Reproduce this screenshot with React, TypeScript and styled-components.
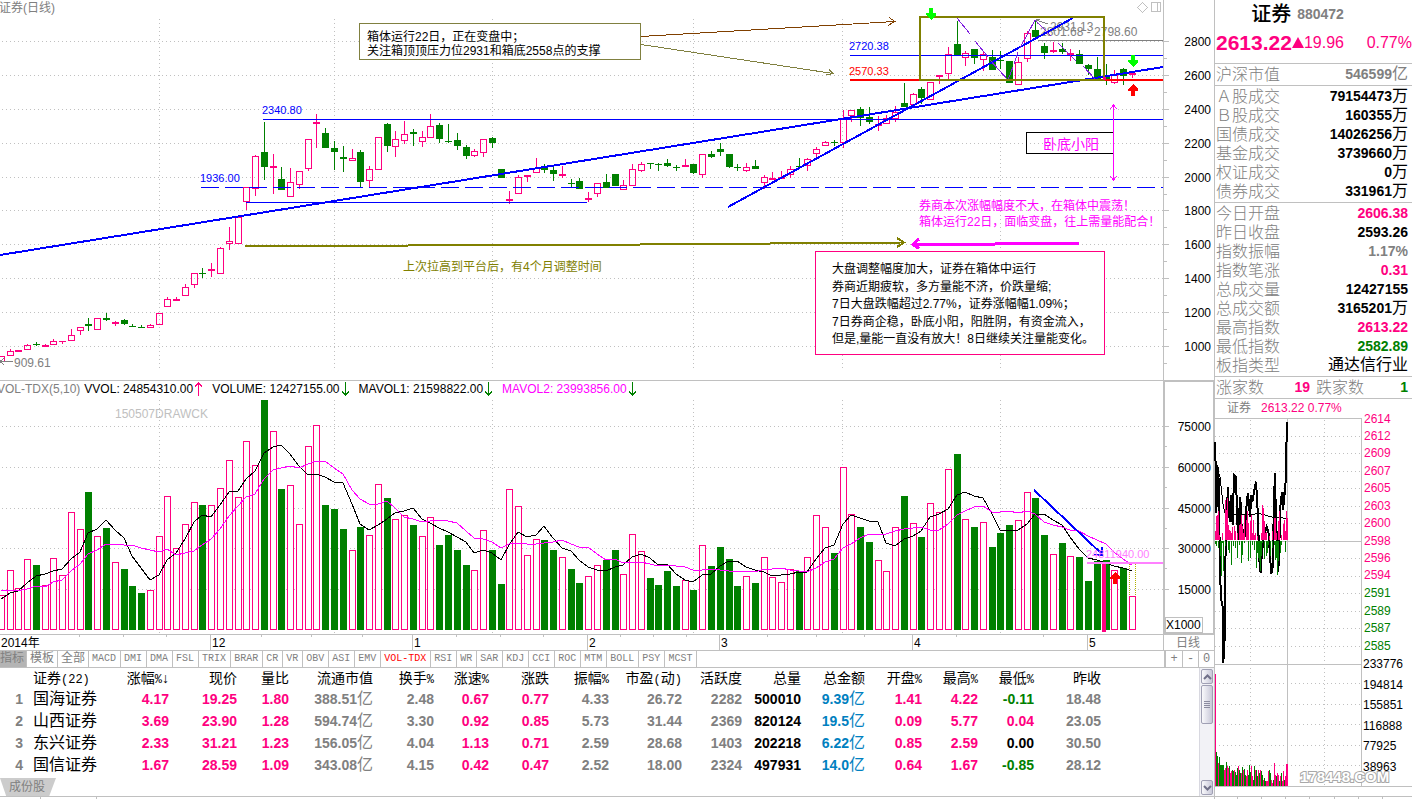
import React from "react";
import styled, { createGlobalStyle } from "styled-components";

const PINK = "#ff0080";
const GREEN = "#008000";
const GRAY = "#808080";
const LINE = "#c0c0c0";
const BLUE = "#0000ff";
const OLIVE = "#808000";
const MAGENTA = "#ff00ff";
const SANS = '"Liberation Sans", "Noto Sans CJK SC", sans-serif';
const MONO = '"Liberation Mono", "Noto Sans CJK SC", monospace';

const GlobalStyle = createGlobalStyle`
  * { box-sizing: border-box; }
  body { margin: 0; background: #fff; color: #000; font: 12px/16px ${SANS}; }
  button { font: inherit; color: inherit; margin: 0; border: 0; background: none; padding: 0; }
`;

/* ---------- data ---------- */

type Kind = "r" | "g";
// kind, body top, body bottom, high, low
type Candle = [Kind, number, number, number, number];

const candles: Candle[] = [
  ["r", 356, 361, 356, 361], ["r", 351, 355, 349, 355], ["r", 350, 351, 350, 351], ["r", 345, 349, 344, 349],
  ["g", 344, 344, 342, 345], ["r", 345, 346, 344, 346], ["r", 341, 344, 339, 344], ["r", 341, 341, 341, 343],
  ["r", 335, 340, 329, 340], ["r", 327, 330, 327, 334], ["g", 324, 325, 318, 330], ["r", 318, 329, 318, 329],
  ["g", 318, 319, 313, 320], ["r", 322, 323, 321, 325], ["g", 320, 323, 319, 324], ["g", 326, 326, 324, 326],
  ["g", 327, 327, 325, 327], ["r", 325, 327, 324, 327], ["r", 313, 324, 313, 324], ["r", 299, 306, 297, 306],
  ["r", 299, 300, 297, 300], ["r", 287, 295, 284, 295], ["r", 273, 284, 273, 287], ["g", 273, 273, 268, 277],
  ["r", 269, 270, 263, 276], ["r", 248, 273, 247, 273], ["r", 241, 243, 227, 249], ["r", 217, 243, 217, 243],
  ["r", 187, 201, 187, 209], ["r", 156, 188, 155, 195], ["g", 152, 166, 122, 179], ["r", 166, 167, 154, 193],
  ["g", 179, 189, 167, 189], ["r", 182, 196, 168, 196], ["r", 171, 184, 171, 188], ["r", 139, 168, 139, 170],
  ["r", 122, 123, 114, 147], ["g", 133, 147, 128, 147], ["g", 148, 151, 141, 169], ["g", 157, 158, 146, 171],
  ["r", 158, 160, 149, 160], ["g", 152, 181, 150, 187], ["r", 169, 180, 166, 187], ["r", 137, 169, 137, 169],
  ["g", 124, 145, 123, 151], ["r", 139, 146, 131, 156], ["r", 134, 140, 121, 143], ["g", 132, 133, 129, 145],
  ["r", 137, 141, 131, 146], ["r", 126, 137, 114, 137], ["g", 125, 138, 123, 142], ["g", 141, 141, 124, 142],
  ["g", 140, 145, 133, 149], ["g", 147, 155, 145, 158], ["r", 151, 155, 149, 156], ["r", 139, 152, 139, 156],
  ["g", 138, 142, 137, 147], ["g", 169, 177, 169, 177], ["r", 199, 200, 191, 203], ["r", 177, 193, 175, 193],
  ["r", 175, 176, 175, 181], ["r", 168, 172, 158, 172], ["g", 167, 169, 164, 172], ["g", 170, 173, 167, 180],
  ["r", 174, 175, 166, 177], ["g", 183, 183, 179, 186], ["g", 181, 188, 178, 188], ["r", 198, 199, 192, 201],
  ["r", 183, 193, 183, 196], ["g", 182, 187, 174, 187], ["g", 174, 185, 174, 185], ["r", 185, 189, 180, 189],
  ["r", 169, 185, 164, 185], ["r", 164, 170, 162, 171], ["g", 163, 163, 163, 168], ["g", 164, 164, 163, 170],
  ["g", 163, 165, 159, 166], ["g", 167, 167, 165, 170], ["r", 165, 166, 159, 166], ["g", 164, 172, 164, 173],
  ["r", 154, 174, 154, 177], ["g", 154, 156, 151, 157], ["g", 149, 151, 143, 155], ["g", 154, 166, 154, 167],
  ["g", 167, 167, 164, 170], ["r", 167, 170, 163, 171], ["g", 166, 168, 160, 168], ["r", 177, 182, 175, 188],
  ["r", 178, 179, 172, 179], ["r", 177, 178, 171, 178], ["r", 169, 174, 166, 177], ["g", 166, 166, 158, 168],
  ["r", 159, 165, 158, 170], ["r", 149, 153, 147, 157], ["r", 142, 145, 141, 145], ["g", 142, 142, 140, 145],
  ["r", 118, 142, 110, 147], ["r", 110, 115, 110, 121], ["g", 109, 117, 107, 125], ["g", 117, 121, 107, 123],
  ["r", 124, 125, 116, 130], ["r", 118, 123, 115, 123], ["r", 112, 118, 106, 121], ["g", 103, 106, 83, 106],
  ["r", 94, 104, 93, 104], ["g", 89, 97, 87, 103], ["r", 82, 99, 82, 99], ["r", 75, 76, 75, 83],
  ["r", 54, 73, 47, 79], ["g", 44, 55, 21, 55], ["r", 53, 57, 51, 65], ["g", 49, 57, 49, 63],
  ["r", 54, 59, 51, 70], ["g", 57, 69, 50, 69], ["g", 60, 60, 51, 68], ["g", 61, 82, 61, 82],
  ["r", 62, 84, 57, 84], ["r", 33, 58, 31, 61], ["g", 30, 36, 21, 36], ["g", 46, 52, 43, 58],
  ["r", 50, 51, 42, 52], ["g", 49, 51, 43, 53], ["r", 53, 54, 49, 60], ["g", 54, 63, 50, 63],
  ["g", 65, 68, 64, 74], ["g", 69, 79, 57, 80], ["g", 77, 79, 64, 84], ["r", 75, 82, 70, 83],
  ["g", 69, 75, 68, 84], ["r", 73, 74, 73, 77],
];

// Bar tops, in thirds of a pixel below the top of the volume scale.
const warmUp = [590, 605, 623, 650, 627, 676, 676, 676, 676];
const volumes = [
  661, 586, 640, 553, 570, 631, 550, 601, 412, 463, 351, 484, 459, 562, 582, 633, 654, 646, 484, 364,
  520, 448, 382, 390, 391, 340, 256, 367, 199, 271, 75, 169, 342, 331, 448, 214, 151, 390, 402, 462,
  526, 456, 481, 328, 369, 433, 422, 450, 484, 427, 510, 480, 525, 570, 586, 466, 525, 627, 343, 394,
  541, 493, 495, 525, 547, 582, 624, 604, 571, 555, 525, 598, 478, 529, 609, 630, 588, 633, 616, 645,
  511, 573, 516, 552, 633, 604, 624, 547, 607, 622, 583, 589, 547, 421, 457, 534, 277, 418, 456, 501,
  556, 589, 457, 363, 445, 486, 385, 412, 283, 237, 433, 456, 442, 516, 474, 450, 436, 352, 369, 480,
  538, 504, 544, 546, 618, 558, 555, 586, 579, 664,
];

const column = (i: number) => Math.floor(1.3 + 8.768 * i);
const volumeY = (v: number) => 375 + Math.floor(v / 3);

const movingAverage = (span: number) => {
  const all = [...warmUp, ...volumes];
  return volumes
    .map((_, i) => {
      const end = i + warmUp.length + 1;
      const mean = all.slice(end - span, end).reduce((a, b) => a + b, 0) / span;
      return `${column(i)},${375 + Math.round(mean / 3)}`;
    })
    .join(" ");
};

const verticals = [159, 334, 492, 693, 842, 1000];
const priceScale: [number, number][] = [
  [2800, 41], [2600, 75], [2400, 109], [2200, 143], [2000, 177],
  [1800, 210], [1600, 244], [1400, 278], [1200, 312], [1000, 346],
];
const volumeScale: [number, number][] = [[75000, 426], [60000, 467], [45000, 508], [30000, 548], [15000, 589]];
const months: [string, number][] = [["12", 210], ["1", 412], ["2", 587], ["3", 719], ["4", 912], ["5", 1087]];
const weekTicks = [79, 123, 166, 261, 311, 362, 456, 500, 543, 620, 653, 686, 767, 816, 864, 956, 1043];

/* ---------- layout ---------- */

const Page = styled.div`
  display: grid;
  grid-template-columns: minmax(0, 1fr) 198px;
  min-height: 100vh;
  overflow: hidden;
`;

const Main = styled.main`
  display: flex;
  flex-direction: column;
  min-width: 0;
`;

const Chart = styled.svg`
  display: block;
  width: 100%;
  height: auto;
  overflow: visible;
  shape-rendering: crispEdges;
  font-family: ${SANS};
  font-size: 12px;
`;

const VolumePanel = styled.section`
  position: relative;
`;

const Legend = styled.div`
  position: absolute;
  top: 0;
  left: 0;
  display: flex;
  gap: 9px;
  margin-left: -3px;
`;

const LegendItem = styled.span<{ $color?: string }>`
  display: flex;
  align-items: center;
  gap: 1px;
  color: ${(p) => p.$color ?? "#000"};
  white-space: nowrap;
  &:first-child { margin-right: -5px; }
`;

const IndicatorBar = styled.nav`
  display: flex;
  height: 17px;
  border-bottom: 1px solid ${LINE};
  font: 10px/16px ${MONO};
`;

const IndicatorTab = styled.button<{ $tone?: "active" | "red"; $cjk?: boolean }>`
  padding: ${(p) => (p.$tone === "active" ? "0 2px 0 0" : p.$cjk ? "0 3px" : "0 4px 0 3px")};
  border-right: 1px solid ${LINE};
  white-space: nowrap;
  font-size: ${(p) => (p.$cjk ? "12px" : "10px")};
  color: ${(p) => (p.$tone === "red" ? "#ff0000" : GRAY)};
  background: ${(p) => (p.$tone === "active" ? "#b4b4b4" : "transparent")};
`;

const ZoomGroup = styled.div`
  display: flex;
  margin-left: auto;
  border-left: 2px solid ${LINE};
`;

const ZoomButton = styled.button`
  width: 16px;
  color: ${GRAY};
  font-size: 12px;
  & + & { border-left: 1px solid ${LINE}; }
`;

const TableArea = styled.section`
  display: flex;
  justify-content: space-between;
  border-bottom: 1px solid ${LINE};
`;

const TableColumn = styled.div`
  flex: 1;
  min-width: 0;
`;

const Quotes = styled.table`
  table-layout: fixed;
  width: 1101px;
  border-collapse: collapse;
`;

const HeadCell = styled.th<{ $left?: boolean }>`
  height: 20px;
  padding: 0;
  font-size: 14px;
  line-height: 20px;
  font-weight: 400;
  white-space: nowrap;
  text-align: ${(p) => (p.$left ? "left" : "right")};
  padding-left: ${(p) => (p.$left ? "10px" : "0")};
`;

const Latin = styled.span`
  font-family: ${MONO};
  font-size: 12px;
  line-height: 12px;
`;

const NameCell = styled.th`
  padding: 0 0 0 10px;
  font-size: 16px;
  line-height: 22px;
  font-weight: 400;
  text-align: left;
  white-space: nowrap;
`;

const Cell = styled.td<{ $color: string }>`
  height: 22px;
  padding: 0;
  font-size: 14px;
  line-height: 22px;
  font-weight: 700;
  text-align: right;
  white-space: nowrap;
  color: ${(p) => p.$color};
`;

const Unit = styled.span`
  font-size: 16px;
  line-height: 16px;
  font-weight: 400;
`;

const SheetTab = styled.button`
  display: block;
  width: 56px;
  height: 18px;
  margin-top: 2px;
  padding-right: 2px;
  line-height: 17px;
  color: ${GRAY};
  background: #cccccc;
  clip-path: polygon(0 0, 100% 0, 88% 100%, 11% 100%);
`;

const ScrollTrack = styled.div`
  display: flex;
  flex-direction: column;
  gap: 1px;
  width: 15px;
  padding: 1px;
  border-left: 1px solid #d8d8e0;
  background: #f2f2f6;
`;

const ScrollPart = styled.button<{ $height: number; $last?: boolean }>`
  display: grid;
  place-items: center;
  height: ${(p) => p.$height}px;
  margin-top: ${(p) => (p.$last ? "auto" : "0")};
  border: 1px solid #a0a0b4;
  border-radius: 2px;
  background: linear-gradient(90deg, #fafafc, #c8c8d8);
`;

const StatusTicks = styled.div`
  display: flex;
  height: 2px;
`;

const StatusCell = styled.span<{ $width: number }>`
  width: ${(p) => p.$width}px;
  border-right: 1px solid ${LINE};
`;

const Side = styled.aside`
  border-left: 1px solid ${LINE};
  min-width: 0;
`;

const Title = styled.h1`
  display: flex;
  justify-content: center;
  align-items: center;
  gap: 6px;
  height: 28px;
  margin: 0;
  padding-right: 32px;
  font-size: 20px;
  line-height: 28px;
  font-weight: 500;
`;

const Code = styled.span`
  color: ${GRAY};
  font-size: 14px;
  font-weight: 700;
`;

const PriceRow = styled.div`
  display: flex;
  align-items: center;
  height: 35px;
  padding: 0 0 6px 1px;
  font-size: 16px;
  color: ${PINK};
  white-space: nowrap;
`;

const LastPrice = styled.strong`
  font-size: 21px;
`;

const Percent = styled.span`
  margin-left: auto;
`;

const Group = styled.dl`
  margin: 0;
  padding: 1px 4px 1px 1px;
  border-top: 1px solid ${LINE};
`;

const Stat = styled.div`
  display: flex;
  justify-content: space-between;
  height: 19px;
  line-height: 19px;
`;

const Counts = styled(Stat)`
  display: grid;
  grid-template-columns: 48px 46px 48px 1fr;
  & > dd { text-align: right; }
  & > dt + dd + dt { padding-left: 6px; white-space: nowrap; }
`;

const Label = styled.dt`
  color: ${GRAY};
  font-size: 16px;
  font-weight: 300;
`;

const Value = styled.dd<{ $color?: string }>`
  margin: 0;
  font-size: 14px;
  font-weight: 700;
  color: ${(p) => p.$color ?? "#000"};
`;

const MiniHeader = styled.div`
  display: flex;
  gap: 10px;
  height: 20px;
  padding: 1px 0 0 12px;
  border-top: 1px solid ${LINE};
  color: ${PINK};
`;

const MiniName = styled.span`
  color: ${GRAY};
`;

/* ---------- charts ---------- */

const Shaft: React.FC<{ x: number; y: number; color: string; up?: boolean }> = ({ x, y, color, up }) => (
  <path
    fill={color}
    d={
      up
        ? `M${x} ${y}l5 5v2h-3v5h-4v-5h-3v-2z`
        : `M${x} ${y + 12}l5 -5v-2h-3v-5h-4v5h-3v2z`
    }
  />
);

const CandleMark: React.FC<{ x: number; data: Candle }> = ({ x, data: [kind, top, bottom, high, low] }) => {
  const color = kind === "r" ? PINK : GREEN;
  const solid = kind === "g" || bottom - top < 2;
  return (
    <g>
      {high < top && <rect x={x} y={high} width={1} height={top - high} fill={color} />}
      {low > bottom && <rect x={x} y={bottom + 1} width={1} height={low - bottom} fill={color} />}
      {solid ? (
        <rect x={x - 3} y={top} width={7} height={bottom - top + 1} fill={color} />
      ) : (
        <rect x={x - 2.5} y={top + 0.5} width={6} height={bottom - top} fill="none" stroke={color} />
      )}
    </g>
  );
};

const PriceChart = () => (
  <Chart viewBox="0 0 1214 381" role="img" aria-label="证券日线">
    <g stroke={LINE} strokeDasharray="1 3">
      {priceScale.map(([v, y]) => <line key={v} x1={2} x2={1163} y1={y + 0.5} y2={y + 0.5} />)}
      {verticals.map((x) => <line key={x} x1={x + 0.5} x2={x + 0.5} y1={19} y2={368} />)}
    </g>
    <g fill={LINE}>
      <rect x={1163} y={0} width={1} height={381} />
      <rect x={0} y={380} width={1214} height={1} />
      {priceScale.map(([v, y]) => (
        <g key={v}>
          <rect x={1164} y={y} width={5} height={1} />
          <rect x={1164} y={y + 17} width={3} height={1} />
        </g>
      ))}
    </g>
    <g textAnchor="end">
      {priceScale.map(([v, y]) => <text key={v} x={1211} y={y + 5}>{v}</text>)}
    </g>
    <text x={-1} y={12} fill={GRAY}>证券(日线)</text>
    <path d="M1142.5 2.5l5 5l-5 5l-5 -5zM1151.5 2.5h9v9h-9zM1157.5 2.5v9" fill="none" stroke={LINE} />

    {candles.map((c, i) => <CandleMark key={i} x={column(i)} data={c} />)}

    <path d="M0 361.5h13M4 358l-4 3.5l4 3.5" fill="none" stroke={GRAY} />
    <text x={14} y={367} fill={GRAY}>909.61</text>

    <g fill={GRAY}>
      <text x={1050} y={31}>2931.13</text>
      <text x={1040} y={36}>2801.68 - 2798.60</text>
      <rect x={1038} y={40} width={125} height={1} />
    </g>
    <path d="M1036 20l12 4M1040 19l-4 1l2 4" fill="none" stroke={GRAY} />

    <g stroke={BLUE} fill="none">
      <path d="M850 55.5H1163M263 119.5H1163M246 202.5H587" />
      <path d="M201 187.5H1163" strokeDasharray="18 6" />
    </g>
    <rect x={850} y={79} width={313} height={2} fill="#ff0000" />
    <g stroke={BLUE} strokeWidth={2}>
      <line x1={0} y1={255} x2={1163} y2={67} />
      <line x1={728} y1={207} x2={1073} y2={18} />
    </g>
    <g fontSize={11} fill={BLUE}>
      <text x={849} y={50}>2720.38</text>
      <text x={849} y={75} fill="#ff0000">2570.33</text>
      <text x={262} y={114}>2340.80</text>
      <text x={200} y={182}>1936.00</text>
    </g>

    <g fill="none" stroke="#8020e0">
      <path d="M957 18l13 16M975 41l13 16M990 60l18 20l5 -13M1014 64l4 -12M1020 48l15 -28l16 16M1058 43l18 18M1083 66l12 13" />
    </g>
    <rect x={920} y={17} width={184} height={63} fill="none" stroke={OLIVE} strokeWidth={2} />
    <rect x={1103} y={77} width={3} height={3} fill={PINK} />
    <Shaft x={931} y={8} color="#00ff00" />
    <Shaft x={1133} y={55} color="#00ff00" />
    <Shaft x={1133} y={84} color="#ff0000" up />

    <rect x={359.5} y={23.5} width={281} height={36} fill="#fff" stroke="#808040" />
    <text x={367} y={41}>箱体运行22日，正在变盘中；</text>
    <text x={367} y={55}>关注箱顶顶压力位2931和箱底2558点的支撑</text>
    <path d="M641 36.5L895 21.5M889 17.5l6 4l-7 4" fill="none" stroke="#804000" />
    <path d="M641 44.5L833 73.5M829 69.5l4 4l-7 1.5" fill="none" stroke="#808040" />

    <rect x={1026.5} y={132.5} width={87} height={21} fill="none" stroke="#000" />
    <text x={1043} y={149} fontSize={14} fill={MAGENTA}>卧底小阳</text>
    <path d="M1113.5 105v75M1110 109l3.500 -4l3.500 4M1110 176l3.500 4l3.500 -4" fill="none" stroke={MAGENTA} />

    <g fill={MAGENTA}>
      <text x={919} y={210}>券商本次涨幅幅度不大，在箱体中震荡！</text>
      <text x={919} y={226}>箱体运行22日，面临变盘，往上需量能配合！</text>
    </g>
    <path d="M245 246L575 245L902 242.500M897 238l7 4.500l-7 4.500" fill="none" stroke={OLIVE} strokeWidth={2} />
    <path d="M1079 243.500L914 244.500M919 239l-6 5.500l6 4" fill="none" stroke={MAGENTA} strokeWidth={3} />
    <text x={403} y={271} fill={OLIVE}>上次拉高到平台后，有4个月调整时间</text>

    <rect x={815.5} y={251.5} width={289} height={103} fill="#fff" stroke={PINK} />
    <text x={832} y={273}>大盘调整幅度加大，证券在箱体中运行</text>
    <text x={832} y={291}>券商近期疲软，多方量能不济，价跌量缩;</text>
    <text x={832} y={308}>7日大盘跌幅超过2.77%，证券涨幅幅1.09%；</text>
    <text x={832} y={326}>7日券商企稳，卧底小阳，阳胜阴，有资金流入，</text>
    <text x={832} y={343}>但是,量能一直没有放大！8日继续关注量能变化。</text>
  </Chart>
);

const VolumeChart = () => (
  <Chart viewBox="0 381 1214 270" role="img" aria-label="成交量">
    <g stroke={LINE} strokeDasharray="1 3">
      {volumeScale.map(([v, y]) => <line key={v} x1={2} x2={1163} y1={y + 0.5} y2={y + 0.5} />)}
      {verticals.map((x) => <line key={x} x1={x + 0.5} x2={x + 0.5} y1={400} y2={633} />)}
    </g>
    <text x={115} y={418} fill={LINE}>150507DRAWCK</text>

    {volumes.map((v, i) => {
      const x = column(i);
      const y = volumeY(v);
      return candles[i][0] === "g" ? (
        <rect key={i} x={x - 3} y={y} width={7} height={630 - y} fill={GREEN} />
      ) : (
        <rect key={i} x={x - 2.5} y={y + 0.5} width={6} height={629 - y} fill="#fff" stroke={PINK} />
      );
    })}
    <path d="M1129.5 562V596M1135.500 562V596" fill="none" stroke="#b0b000" strokeDasharray="1 1" />
    <polyline points={movingAverage(5)} fill="none" stroke="#000" />
    <polyline points={movingAverage(10)} fill="none" stroke={MAGENTA} />

    <rect x={1102} y={562} width={4} height={70} fill={PINK} />
    <Shaft x={1115} y={572} color="#ff0000" up />
    <path d="M1034 490L1103 555M1102 547v8h-8" fill="none" stroke={BLUE} strokeWidth={2} />
    <text x={1086} y={558} fontSize={11} fill="#ff80ff">24811940.00</text>
    <rect x={1087} y={562} width={76} height={2} fill="#ff80ff" />

    <g fill={LINE}>
      <rect x={1163} y={381} width={2} height={253} />
      <rect x={1165} y={381} width={49} height={1} />
      <rect x={1213} y={381} width={1} height={253} />
      <rect x={0} y={634} width={1214} height={1} />
      <rect x={1163} y={633} width={51} height={2} />
      <rect x={0} y={650} width={1214} height={1} />
      <rect x={1163} y={635} width={1} height={15} />
      {volumeScale.map(([v, y]) => (
        <g key={v}>
          <rect x={1165} y={y} width={4} height={1} />
          {v > 15000 && <rect x={1165} y={y + 20} width={2} height={1} />}
        </g>
      ))}
      {months.map(([m, x]) => <rect key={m} x={x} y={635} width={1} height={15} />)}
      {weekTicks.map((x) => <rect key={x} x={x} y={635} width={1} height={2} />)}
    </g>
    <g textAnchor="end">
      {volumeScale.map(([v, y]) => <text key={v} x={1211} y={y + 5}>{v}</text>)}
    </g>
    <rect x={1165.5} y={617.5} width={37} height={15} fill="#fff" stroke={LINE} />
    <text x={1166} y={629}>X1000</text>
    <text x={1} y={647}>2014年</text>
    {months.map(([m, x]) => <text key={m} x={x + 2} y={647}>{m}</text>)}
    <text x={1176} y={647} fill={GRAY}>日线</text>
  </Chart>
);

const Trend: React.FC<{ up?: boolean }> = ({ up }) => (
  <svg width="9" height="14" viewBox="0 0 9 14" fill="none" stroke={up ? PINK : GREEN} shapeRendering="crispEdges">
    <path d={up ? "M4.500 0V14M1 4.500L4.500 1L8 4.500" : "M4.500 0V14M1 9.500L4.500 13L8 9.500"} strokeWidth="1.500" />
  </svg>
);

/* ---------- intraday chart ---------- */

// The intraday figures below are in thirds of a pixel.
const pricePath =
  "16,126 18,340 21,195 24,320 25,200 28,380 31,545 35,610 38,620 40,790 43,720 46,720 45,520 48,420 50,340 54,262 57,340 60,365 64,285 68,375 72,225 78,232 80,300 84,420 88,330 91,292 94,370 100,400 104,410 110,310 114,278 120,350 124,292 128,300 132,275 138,245 142,310 145,390 148,480 152,520 155,470 160,420 164,400 170,380 176,400 180,470 184,522 188,500 192,300 195,220 198,370 202,430 205,515 209,400 212,300 218,275 219,330 224,280 228,230 229,140 232,66";
const averagePath = "16,195 30,230 40,320 50,355 70,343 120,345 145,340 190,352 232,355";
const buys: [number, number][] = [
  [16, 395], [19, 350], [22, 345], [25, 335], [28, 405], [36, 400], [45, 300], [48, 330], [51, 295], [54, 375],
  [57, 390], [60, 395], [64, 400], [68, 382], [72, 378], [76, 395], [82, 400], [88, 375], [91, 372], [94, 345],
  [97, 380], [100, 400], [104, 345], [108, 360], [112, 333], [116, 370], [120, 365], [123, 345], [126, 400],
  [129, 360], [132, 405], [136, 400], [142, 410], [153, 400], [156, 315], [159, 325], [162, 365], [166, 400],
  [170, 398], [178, 410], [188, 395], [192, 355], [195, 355], [200, 400], [206, 365], [209, 335], [214, 405],
  [220, 372], [223, 360], [226, 395], [229, 335], [232, 355],
];
const sells: [number, number][] = [
  [16, 432], [19, 440], [24, 445], [30, 470], [33, 528], [37, 430], [40, 515], [45, 440], [54, 450], [58, 460],
  [64, 495], [70, 440], [76, 445], [82, 475], [88, 435], [94, 490], [97, 465], [103, 430], [115, 485], [121, 475],
  [128, 435], [134, 450], [139, 505], [142, 460], [145, 475], [148, 485], [151, 515], [154, 470], [158, 430],
  [163, 478], [168, 470], [172, 460], [176, 435], [182, 470], [186, 445], [192, 435], [196, 480], [200, 475],
  [203, 525], [206, 485], [210, 460], [214, 435], [226, 458],
];
const minuteVolumes = [
  822, 1057, 1070, 1090, 1072, 1095, 1095, 1095, 1095, 1110, 1105, 1087, 1100, 1105, 1100, 1120, 1115, 1110,
  1115, 1112, 1118, 1125, 1105, 1100, 1110, 1120, 1120, 1103, 1110, 1108, 1125, 1130, 1110, 1125, 1095, 1118, 1098,
  1130, 1140, 1100, 1110, 1112, 1130, 1110, 1120, 1112, 1115, 1125, 1140, 1135, 1145, 1145, 1145, 1115, 1110, 1120,
  1140, 1150, 1140, 1090, 1125, 1130, 1120, 1125, 1145, 1130, 1120, 1145, 1115, 1140, 1130, 1092, 1092,
];
const minuteKinds = "rggrgggggrrgrrgrrggrgggrggrgrggrrgggrrggrggrgrggrggrrrggrrgrrgrrgrgrrgrrr";
const levels: [number, number][] = [
  [2614, 57], [2612, 108], [2609, 159], [2607, 212], [2605, 264], [2603, 317], [2600, 369], [2598, 422], [2596, 473],
  [2594, 526], [2591, 578], [2589, 632], [2587, 684], [2585, 738],
];
const volumeLevels: [number, number][] = [
  [233776, 791], [194814, 855], [155851, 914], [116888, 977], [77925, 1037], [38963, 1101],
];
const dottedRows = [36, 53, 71, 88, 106, 123, 158, 176, 193, 211, 228, 246, 283, 304, 324, 345, 365];

const third = (n: number) => Math.floor(n / 3);

const MiniChart = () => (
  <Chart viewBox="5 18 197 381" role="img" aria-label="分时走势">
    <g stroke={LINE} strokeDasharray="1 3">
      {dottedRows.map((y) => <line key={y} x1={5} x2={151} y1={y + 0.5} y2={y + 0.5} />)}
      <line x1={40.5} x2={40.5} y1={20} y2={386} />
      <line x1={114.5} x2={114.5} y1={20} y2={386} />
    </g>
    <g fill={LINE}>
      <rect x={5} y={18} width={147} height={1} />
      <rect x={5} y={141} width={147} height={1} />
      <rect x={5} y={264} width={147} height={1} />
      <rect x={5} y={386} width={197} height={1} />
      <rect x={151} y={18} width={1} height={368} />
      <rect x={77} y={18} width={1} height={368} />
      <rect x={5} y={396} width={197} height={1} />
      {[27, 51, 75, 99, 124, 148, 172].map((x) => <rect key={x} x={x} y={396} width={1} height={3} />)}
    </g>
    <g transform="scale(0.33333)" fill="none" stroke="#000">
      <polyline points={averagePath} strokeWidth={3} />
      <polyline points={pricePath} strokeWidth={6} />
    </g>
    {buys.map(([x, y]) => <rect key={x} x={third(x)} y={third(y)} width={1} height={140 - third(y)} fill={PINK} />)}
    {sells.map(([x, y]) => <rect key={x} x={third(x)} y={141} width={1} height={third(y) - 141} fill={GREEN} />)}
    {minuteVolumes.map((y, i) => (
      <rect
        key={i}
        x={5 + i}
        y={third(y)}
        width={1}
        height={386 - third(y)}
        fill={minuteKinds[i] === "g" ? GREEN : PINK}
      />
    ))}
    {levels.map(([v, y]) => (
      <text key={v} x={154} y={Math.round(y / 3) + 4} fill={v > 2592 ? PINK : GREEN}>{v}</text>
    ))}
    {volumeLevels.map(([v, y]) => <text key={v} x={153} y={Math.round(y / 3) + 4}>{v}</text>)}
    <text
      x={90}
      y={382}
      fontWeight={700}
      fontSize={15}
      fill="#fff"
      stroke="#a8a8a8"
      strokeWidth={2}
      paintOrder="stroke"
    >
      178448.COM
    </text>
  </Chart>
);

/* ---------- quote table and side panel ---------- */

const indicators = [
  "MACD", "DMI", "DMA", "FSL", "TRIX", "BRAR", "CR", "VR", "OBV", "ASI", "EMV", "VOL-TDX", "RSI", "WR", "SAR",
  "KDJ", "CCI", "ROC", "MTM", "BOLL", "PSY", "MCST",
];

const widths = [23, 75, 71, 68, 52, 84, 61, 55, 60, 60, 73, 60, 59, 64, 57, 56, 56, 67];
const heads = [
  "涨幅%↓", "现价", "量比", "流通市值", "换手%", "涨速%", "涨跌", "振幅%", "市盈(动)", "活跃度", "总量", "总金额",
  "开盘%", "最高%", "最低%", "昨收",
];
const rows = [
  ["国海证券", "4.17", "19.25", "1.80", "388.51亿", "2.48", "0.67", "0.77", "4.33", "26.72", "2282", "500010", "9.39亿", "1.41", "4.22", "-0.11", "18.48"],
  ["山西证券", "3.69", "23.90", "1.28", "594.74亿", "3.30", "0.92", "0.85", "5.73", "31.44", "2369", "820124", "19.5亿", "0.09", "5.77", "0.04", "23.05"],
  ["东兴证券", "2.33", "31.21", "1.23", "156.05亿", "4.04", "1.13", "0.71", "2.59", "28.68", "1403", "202218", "6.22亿", "0.85", "2.59", "0.00", "30.50"],
  ["国信证券", "1.67", "28.59", "1.09", "343.08亿", "4.15", "0.42", "0.47", "2.52", "18.00", "2324", "497931", "14.0亿", "0.64", "1.67", "-0.85", "28.12"],
];
const grayColumns = [3, 4, 7, 8, 9, 15];

const cellColor = (value: string, col: number) => {
  if (grayColumns.includes(col)) return GRAY;
  if (col === 10) return "#000";
  if (col === 11) return "#0080c0";
  if (value.startsWith("-")) return GREEN;
  return value === "0.00" ? "#000" : PINK;
};

const Amount: React.FC<{ text: string }> = ({ text }) => {
  const match = text.match(/^([-\d.%]*)(.*)$/);
  return <>{match?.[1]}{match?.[2] && <Unit>{match[2]}</Unit>}</>;
};

const Heading: React.FC<{ text: string }> = ({ text }) => (
  <>{text.split(/([\d%()]+)/).map((part, i) => (i % 2 ? <Latin key={i}>{part}</Latin> : part))}</>
);

type StatItem = [string, string, string?];
const groups: StatItem[][] = [
  [["沪深市值", "546599亿", GRAY]],
  [
    ["Ａ股成交", "79154473万"], ["Ｂ股成交", "160355万"], ["国债成交", "14026256万"],
    ["基金成交", "3739660万"], ["权证成交", "0万"], ["债券成交", "331961万"],
  ],
  [
    ["今日开盘", "2606.38", PINK], ["昨日收盘", "2593.26"], ["指数振幅", "1.17%", GRAY], ["指数笔涨", "0.31", PINK],
    ["总成交量", "12427155"], ["总成交额", "3165201万"], ["最高指数", "2613.22", PINK],
    ["最低指数", "2582.89", GREEN], ["板指类型", "通达信行业"],
  ],
];

export default function App() {
  return (
    <>
      <GlobalStyle />
      <Page>
        <Main>
          <PriceChart />
          <VolumePanel>
            <VolumeChart />
            <Legend>
              <LegendItem $color={GRAY}>VOL-TDX(5,10)</LegendItem>
              <LegendItem>VVOL: 24854310.00<Trend up /></LegendItem>
              <LegendItem>VOLUME: 12427155.00<Trend /></LegendItem>
              <LegendItem>MAVOL1: 21598822.00<Trend /></LegendItem>
              <LegendItem $color={MAGENTA}>MAVOL2: 23993856.00<Trend /></LegendItem>
            </Legend>
          </VolumePanel>
          <IndicatorBar>
            <IndicatorTab $cjk $tone="active">指标</IndicatorTab>
            <IndicatorTab $cjk>模板</IndicatorTab>
            <IndicatorTab $cjk>全部</IndicatorTab>
            {indicators.map((name) => (
              <IndicatorTab key={name} $tone={name === "VOL-TDX" ? "red" : undefined}>{name}</IndicatorTab>
            ))}
            <ZoomGroup>
              <ZoomButton>+</ZoomButton>
              <ZoomButton>-</ZoomButton>
              <ZoomButton>0</ZoomButton>
            </ZoomGroup>
          </IndicatorBar>
          <TableArea>
            <TableColumn>
              <Quotes>
                <colgroup>{widths.map((w, i) => <col key={i} width={w} />)}</colgroup>
                <thead>
                  <tr>
                    <HeadCell />
                    <HeadCell $left><Heading text="证券(22)" /></HeadCell>
                    {heads.map((h) => <HeadCell key={h}><Heading text={h} /></HeadCell>)}
                  </tr>
                </thead>
                <tbody>
                  {rows.map(([name, ...values], r) => (
                    <tr key={name}>
                      <Cell $color={GRAY}>{r + 1}</Cell>
                      <NameCell scope="row">{name}</NameCell>
                      {values.map((v, c) => (
                        <Cell key={c} $color={cellColor(v, c)}><Amount text={v} /></Cell>
                      ))}
                    </tr>
                  ))}
                </tbody>
              </Quotes>
              <SheetTab>成份股</SheetTab>
            </TableColumn>
            <ScrollTrack>
              <ScrollPart $height={15} aria-label="向上">
                <svg width="9" height="6" fill="none" stroke="#707088" strokeWidth="2"><path d="M1 5l3.500 -3.500L8 5" /></svg>
              </ScrollPart>
              <ScrollPart $height={39} aria-label="滚动">
                <svg width="6" height="8" stroke="#8c8ca0"><path d="M0 .5h6M0 2.500h6M0 4.500h6M0 6.500h6" /></svg>
              </ScrollPart>
              <ScrollPart $height={15} $last aria-label="向下">
                <svg width="9" height="6" fill="none" stroke="#707088" strokeWidth="2"><path d="M1 1l3.500 3.500L8 1" /></svg>
              </ScrollPart>
            </ScrollTrack>
          </TableArea>
          <StatusTicks>
            <StatusCell $width={41} />
            <StatusCell $width={56} />
          </StatusTicks>
        </Main>
        <Side>
          <Title>证券<Code>880472</Code></Title>
          <PriceRow>
            <LastPrice>2613.22</LastPrice>
            <svg width="12" height="11" viewBox="0 0 12 11"><path d="M6 0l6 11H0z" fill={PINK} /></svg>
            <span>19.96</span>
            <Percent>0.77%</Percent>
          </PriceRow>
          {groups.map((items, g) => (
            <Group key={g}>
              {items.map(([label, value, color]) => (
                <Stat key={label}>
                  <Label>{label}</Label>
                  <Value $color={color}><Amount text={value} /></Value>
                </Stat>
              ))}
            </Group>
          ))}
          <Group>
            <Counts>
              <Label>涨家数</Label>
              <Value $color={PINK}>19</Value>
              <Label>跌家数</Label>
              <Value $color={GREEN}>1</Value>
            </Counts>
          </Group>
          <MiniHeader>
            <MiniName>证券</MiniName>
            <span>2613.22 0.77%</span>
          </MiniHeader>
          <MiniChart />
        </Side>
      </Page>
    </>
  );
}
